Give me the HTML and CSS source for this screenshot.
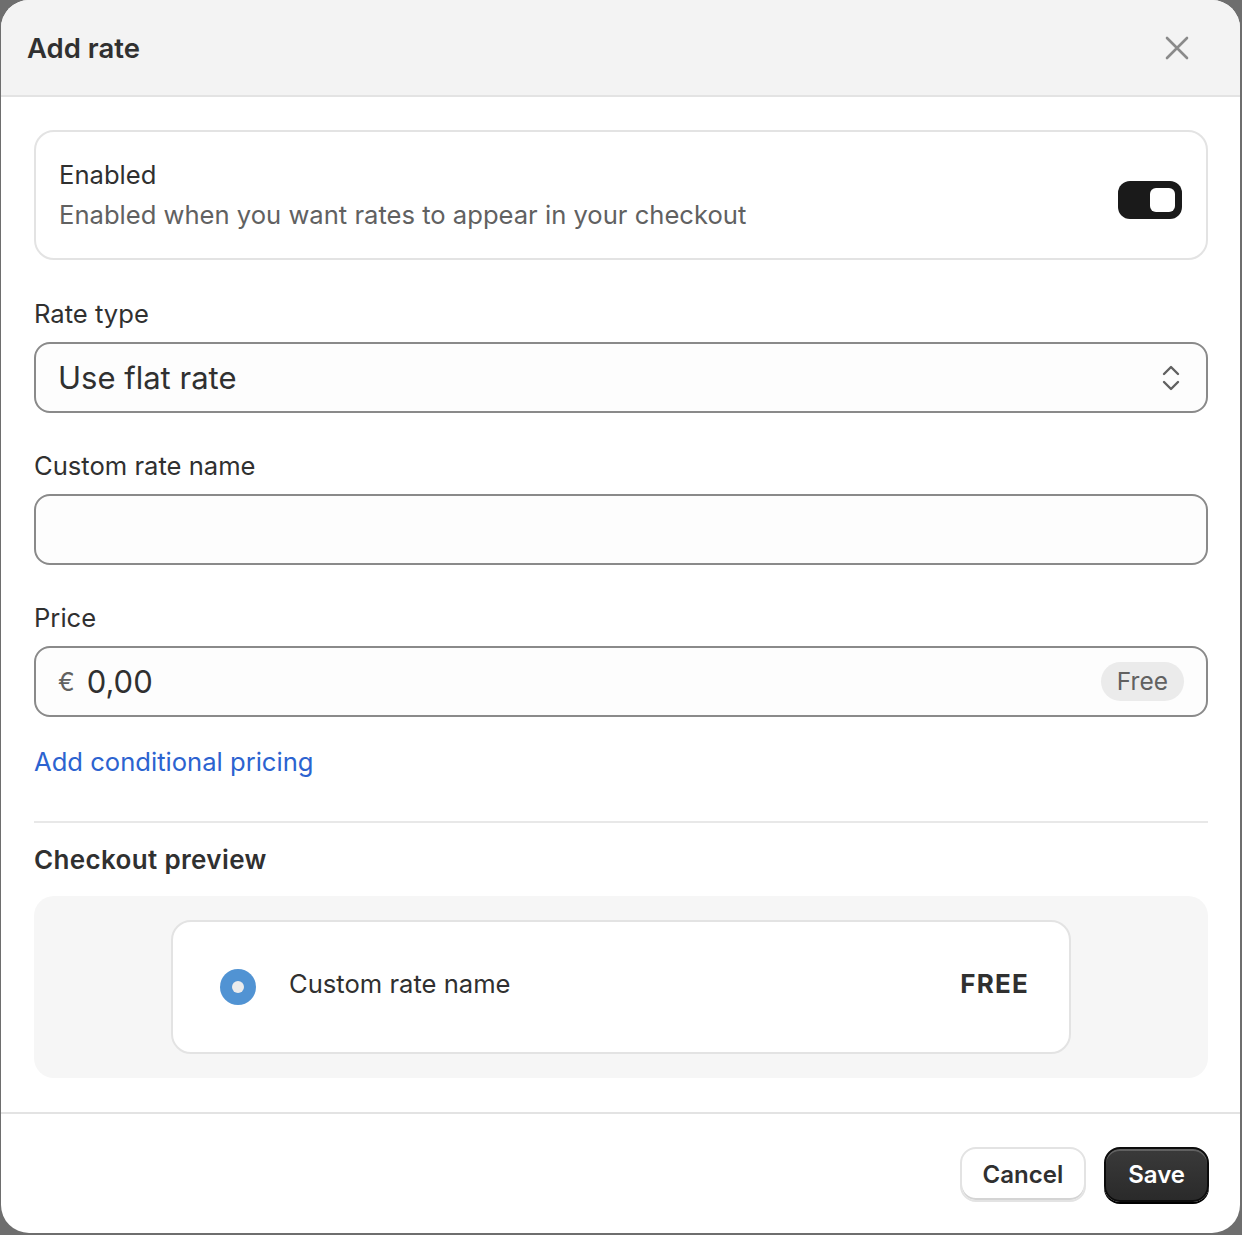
FILE: index.html
```html
<!DOCTYPE html>
<html>
<head>
    <meta charset="UTF-8">
    <title>Add rate</title>
    <link rel="stylesheet" href="styles.css">
</head>
<body>
    <div class="modal">
        <div class="modal-header">
            <div class="modal-title">Add rate</div>
            <button class="close-button" aria-label="Close">
                <svg width="26" height="26" viewBox="0 0 26 26">
                    <path d="M3 3 L23 23 M23 3 L3 23" stroke="#8a8a8a" stroke-width="2.6" stroke-linecap="round" fill="none"/>
                </svg>
            </button>
        </div>

        <div class="modal-body">
            <div class="toggle-card">
                <div class="toggle-text">
                    <div class="toggle-title">Enabled</div>
                    <div class="toggle-subtitle">Enabled when you want rates to appear in your checkout</div>
                </div>
                <div class="toggle on"><div class="toggle-knob"></div></div>
            </div>

            <div class="field">
                <div class="field-label">Rate type</div>
                <div class="input select">
                    <span class="input-value">Use flat rate</span>
                    <svg class="select-icon" width="22" height="30" viewBox="0 0 22 30">
                        <path d="M4 11 L11 4 L18 11 M4 19 L11 26 L18 19" stroke="#616161" stroke-width="2.4" stroke-linecap="round" stroke-linejoin="round" fill="none"/>
                    </svg>
                </div>
            </div>

            <div class="field">
                <div class="field-label">Custom rate name</div>
                <div class="input"></div>
            </div>

            <div class="field">
                <div class="field-label">Price</div>
                <div class="input">
                    <span class="input-prefix">€</span>
                    <span class="input-value">0,00</span>
                    <span class="badge">Free</span>
                </div>
            </div>

            <a class="link" href="#">Add conditional pricing</a>

            <hr class="divider">

            <div class="section-title">Checkout preview</div>
            <div class="preview">
                <div class="preview-card">
                    <div class="radio"><div class="radio-dot"></div></div>
                    <div class="preview-name">Custom rate name</div>
                    <div class="preview-price">FREE</div>
                </div>
            </div>
        </div>

        <div class="modal-footer">
            <button class="button">Cancel</button>
            <button class="button primary">Save</button>
        </div>
    </div>
</body>
</html>
```

FILE: styles.css
```css
body, html {
    margin: 0;
    padding: 0;
    background: #6e6e6e;  /* backdrop */
}

body {
    font-family: Inter, 'Noto Sans', sans-serif;
    color: #303030;
    -webkit-font-smoothing: antialiased;
}

.modal {
    margin: 0 2px 0 1px;
    height: 1233px;
    background: #fff;
    border-radius: 28px;
    overflow: hidden;
    display: flex;
    flex-direction: column;
}

.modal-header {
    flex-shrink: 0;
    height: 97px;
    background: #f3f3f3;
    border-bottom: 2px solid #e3e3e3;
    box-sizing: border-box;
    display: flex;
    align-items: center;
    justify-content: space-between;
    padding: 0 50px 0 26px;
}

.modal-title {
    font-size: 27.5px;
    font-weight: 600;
    color: #303030;
}

.close-button {
    border: none;
    background: none;
    padding: 0;
    width: 26px;
    height: 26px;
    display: flex;
}

.modal-body {
    flex-shrink: 0;
    padding: 33px 32px 33px 33px;
    display: flex;
    flex-direction: column;
}

.toggle-card {
    border: 2px solid #e3e3e3;
    border-radius: 20px;
    padding: 23px 24px 23px 23px;
    display: flex;
    align-items: center;
    justify-content: space-between;
}

.toggle-title,
.toggle-subtitle,
.field-label,
.link,
.section-title {
    font-size: 25.6px;
    line-height: 40px;
}

.toggle-subtitle {
    color: #616161;
}

.toggle {
    width: 64px;
    height: 38px;
    margin-top: 10px;
    background: #1a1a1a;
    border-radius: 12px;
    display: flex;
    align-items: center;
    justify-content: flex-end;
    padding: 0 7px;
    box-sizing: border-box;
}

.toggle-knob {
    width: 25px;
    height: 24px;
    background: #fff;
    border-radius: 6px;
}

.field {
    margin-top: 34px;
}

.field + .field {
    margin-top: 33px;
}

.field-label {
    margin-bottom: 8px;
}

.input {
    height: 71px;
    border: 2px solid #8a8a8a;
    border-radius: 16px;
    background: #fdfdfd;
    box-sizing: border-box;
    display: flex;
    align-items: center;
    padding: 0 22px 0 22px;
}

.input-value {
    font-size: 31px;
    color: #303030;
    flex: 1;
}

.input-prefix {
    font-size: 25px;
    color: #616161;
    margin-right: 12px;
}

.select-icon {
    margin-right: 2px;
}

.badge {
    background: #ebebeb;
    color: #616161;
    font-size: 24.5px;
    border-radius: 20px;
    padding: 0 16px;
    height: 39px;
    line-height: 39px;
}

.link {
    margin-top: 25px;
    color: #2c63d0;
    text-decoration: none;
    align-self: flex-start;
}

.divider {
    border: none;
    border-top: 2px solid #e8e8e8;
    margin: 39px 0 17px;
}

.section-title {
    font-size: 26px;
    font-weight: 600;
    letter-spacing: 0.35px;
}

.preview {
    margin-top: 16px;
    background: #f6f6f6;
    border-radius: 20px;
    padding: 24px 0;
    display: flex;
    justify-content: center;
}

.preview-card {
    width: 900px;
    height: 134px;
    box-sizing: border-box;
    background: #fff;
    border: 2px solid #e3e3e3;
    border-radius: 20px;
    display: flex;
    align-items: center;
    padding: 0 40px 0 47px;
}

.radio {
    width: 36px;
    height: 36px;
    border-radius: 50%;
    background: #5193d3;
    display: flex;
    align-items: center;
    justify-content: center;
}

.radio-dot {
    width: 12px;
    height: 12px;
    border-radius: 50%;
    background: #ececec;
}

.preview-name {
    flex: 1;
    margin-left: 33px;
    margin-bottom: 8px;
    font-size: 25.6px;
}

.preview-price {
    margin-bottom: 8px;
    font-size: 26px;
    font-weight: 700;
    letter-spacing: 1.2px;
}

.modal-footer {
    flex-shrink: 0;
    margin-top: auto;
    border-top: 2px solid #e3e3e3;
    display: flex;
    justify-content: flex-end;
    gap: 18px;
    padding: 33px 31px 31px;
}

.button {
    height: 55px;
    border-radius: 16px;
    font-family: inherit;
    font-size: 24px;
    font-weight: 600;
    padding: 0 21px;
    background: #fff;
    color: #303030;
    border: 2px solid #e3e3e3;
    box-shadow: inset 0 -2px 0 #d4d4d4;
}

.button.primary {
    padding: 0 22px;
    background: linear-gradient(#3a3a3a, #2a2a2a);
    color: #fff;
    border: 2px solid #0c0c0c;
    box-shadow: inset 0 2px 0 rgba(255,255,255,0.2), 0 2px 0 #000;
}
```
